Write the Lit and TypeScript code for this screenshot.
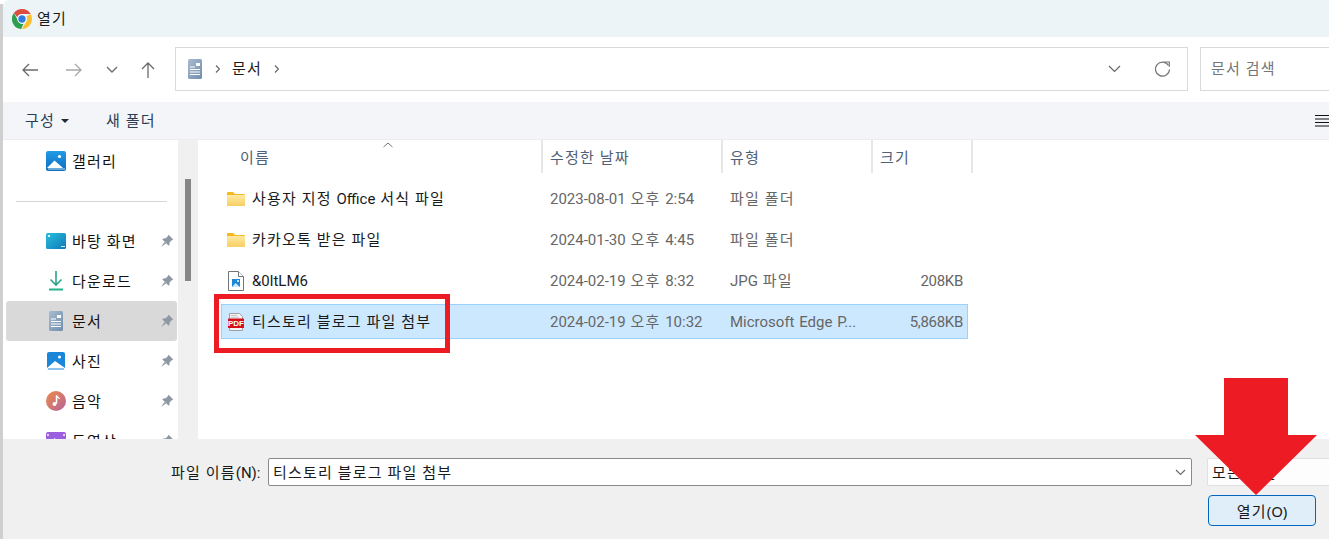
import { LitElement, html, css, svg } from "lit";
import { customElement } from "lit/decorators.js";

const k = (text: string) =>
  text.split(/([\uAC00-\uD7A3]+)/).map((part) =>
    /[\uAC00-\uD7A3]/.test(part) ? html`<span class="k">${part}</span>` : part);

const pin = svg`<svg class="pin" width="14" height="14" viewBox="0 0 14 14"><path d="M8.600 .8 13.200 5.400 11.800 6.200 9.700 8.300 9.400 11 8.400 11.600 2.400 5.600 3 4.600 5.700 4.300 7.800 2.200Z M4.600 8 1 13 6 9.400Z" fill="#8d98a3"/></svg>`;
const docIcon = svg`<svg width="14" height="20" viewBox="0 0 14 20"><defs><linearGradient id="dg" x1="0" y1="0" x2="1" y2="1"><stop offset="0" stop-color="#a9bcd0"/><stop offset="1" stop-color="#6f8eae"/></linearGradient></defs><rect width="14" height="20" rx="1.500" fill="url(#dg)"/><path d="M2 8h5M2 10.500h10M2 13h10M2 15.500h10" stroke="#fff" stroke-width="1.100" fill="none"/><rect x="8" y="4" width="4" height="3" fill="#fff"/></svg>`;
const gallery = svg`<svg width="20" height="20" viewBox="0 0 20 20"><defs><linearGradient id="gg" x1="0" y1="0" x2="0" y2="1"><stop offset="0" stop-color="#1f9be6"/><stop offset="1" stop-color="#0f6cbd"/></linearGradient></defs><rect width="20" height="20" rx="2" fill="url(#gg)"/><circle cx="13.500" cy="5.500" r="1.600" fill="#fff"/><path d="M1 17 8.500 9.500 17 17Z" fill="#fff"/><path d="M2 17.500h17v1H2z" fill="#bfe0f7"/></svg>`;
const desktop = svg`<svg width="20" height="16" viewBox="0 0 20 16"><defs><linearGradient id="dk" x1="0" y1="0" x2="1" y2="1"><stop offset="0" stop-color="#28c0dc"/><stop offset="1" stop-color="#0f79b8"/></linearGradient></defs><rect width="20" height="16" rx="1.500" fill="url(#dk)"/><rect x="2" y="2" width="2" height="2" fill="#d5f4fa"/><rect x="15" y="13" width="4" height="1" fill="#d5f4fa"/></svg>`;
const download = svg`<svg width="14" height="20" viewBox="0 0 14 20"><path d="M7 0v14M1.500 8.500 7 14l5.500-5.500" fill="none" stroke="#2aa58c" stroke-width="1.600"/><path d="M0 18.500h14" stroke="#21b38a" stroke-width="2"/></svg>`;
const photo = svg`<svg width="18" height="18" viewBox="0 0 18 18"><rect width="18" height="18" rx="2" fill="#1a86d9"/><circle cx="12.500" cy="5" r="1.500" fill="#fff"/><path d="M0 16 8 9l10 7v.5a1.500 1.500 0 0 1-1.500 1.500h-15A1.500 1.500 0 0 1 0 16.500Z" fill="#fff"/><path d="M1 17h16" stroke="#1a86d9" stroke-width="1"/></svg>`;
const music = svg`<svg width="20" height="20" viewBox="0 0 20 20"><defs><linearGradient id="mg" x1="0" y1="0" x2="1" y2="1"><stop offset="0" stop-color="#ef8a45"/><stop offset="1" stop-color="#b3649f"/></linearGradient></defs><circle cx="10" cy="10" r="10" fill="url(#mg)"/><path d="M10.500 4.500v8" stroke="#fff" stroke-width="1.500"/><path d="M10.500 4.500c.5 2 2.500 2 3 3.500" stroke="#fff" stroke-width="1.300" fill="none"/><circle cx="8.500" cy="13" r="2" fill="#fff"/></svg>`;
const video = svg`<svg width="20" height="18" viewBox="0 0 20 18"><rect width="20" height="18" rx="2" fill="#9b5fe0"/><path d="M1 2h2v2H1zM1 7h2v2H1zM17 2h2v2h-2zM17 7h2v2h-2z" fill="#e3cffa"/><path d="M8 6l5 3-5 3z" fill="#fff"/></svg>`;
const folder = svg`<svg width="18" height="14" viewBox="0 0 18 14"><path d="M0 1.200C0 .5.500 0 1.200 0H6l2 2h9c.6 0 1 .4 1 1v1H0Z" fill="#f5b81f"/><defs><linearGradient id="fg" x1="0" y1="0" x2="0" y2="1"><stop offset="0" stop-color="#fde9a3"/><stop offset="1" stop-color="#f8cf63"/></linearGradient></defs><path d="M0 3h18v10c0 .6-.4 1-1 1H1c-.6 0-1-.4-1-1Z" fill="url(#fg)"/></svg>`;
const jpg = svg`<svg width="16" height="20" viewBox="0 0 16 20"><path d="M.500.500h10l5 5v14H.500Z" fill="#fff" stroke="#70757a"/><path d="M10.500.500v5h5" fill="#fff" stroke="#70757a"/><rect x="4" y="8" width="8" height="8" fill="#1f86d8"/><path d="M4 16l3.500-4 4.500 4Z" fill="#cfe9fb"/><circle cx="10" cy="10" r="1" fill="#fff"/></svg>`;
const pdf = svg`<svg width="16" height="18" viewBox="0 0 16 18"><path d="M1.500.500h10l3 3v14h-13Z" fill="#f4f4f4" stroke="#a0a0a0"/><path d="M3 2.500h6M3 4.300h8" stroke="#bbb" stroke-width=".8"/><rect y="5.500" width="16" height="9.500" rx=".5" fill="#d3101c"/><text x="8" y="13.200" text-anchor="middle" font-family="Liberation Sans" font-weight="700" font-size="8" fill="#fff">PDF</text></svg>`;

const side = [
  { icon: gallery, name: "갤러리", pin: false },
  null,
  { icon: desktop, name: "바탕 화면", pin: true },
  { icon: download, name: "다운로드", pin: true },
  { icon: docIcon, name: "문서", pin: true, sel: true },
  { icon: photo, name: "사진", pin: true },
  { icon: music, name: "음악", pin: true },
  { icon: video, name: "동영상", pin: true },
];
const files = [
  { icon: folder, name: "사용자 지정 Office 서식 파일", date: "2023-08-01 오후 2:54", type: "파일 폴더", size: "" },
  { icon: folder, name: "카카오톡 받은 파일", date: "2024-01-30 오후 4:45", type: "파일 폴더", size: "" },
  { icon: jpg, name: "&0ltLM6", date: "2024-02-19 오후 8:32", type: "JPG 파일", size: "208KB" },
  { icon: pdf, name: "티스토리 블로그 파일 첨부", date: "2024-02-19 오후 10:32", type: "Microsoft Edge P...", size: "5,868KB", sel: true },
];

@customElement("app-root")
export class AppRoot extends LitElement {
  static styles = css`
    :host { display: block; position: relative; width: 1329px; height: 539px; overflow: hidden; background: #fff;
      font: 15px/20px Roboto, "Noto Sans CJK KR", sans-serif; color: #1a1a1a; word-spacing: 1px; }
    .k { font-family: "Noto Sans CJK KR", sans-serif; letter-spacing: 1.200px; }
    .win { height: 539px; margin-left: 3px; display: flex; flex-direction: column; }
    .edge { position: absolute; left: 0; top: 4px; bottom: 0; width: 3px; background: #cfcfcf; }
    .title { height: 37px; flex: none; background: #edf4f8; display: flex; align-items: center; gap: 5px; padding-left: 9px; border-top-left-radius: 6px; }
    .title svg { display: block; }
    .nav { height: 65px; flex: none; display: flex; align-items: flex-start; padding-top: 10px; box-sizing: border-box; }
    .navbtns { width: 172px; display: flex; align-items: center; flex: none; padding: 1px 0 0 19px; box-sizing: border-box; height: 44px; }
    .navbtns svg { display: block; }
    .addr { width: 1013px; height: 44px; box-sizing: border-box; border: 1.500px solid #d9d9d9; display: flex; align-items: center; padding-left: 12px; flex: none; }
    .addr .crumb { margin: -2px 12px 0 12px; line-height: 20px; }
    .addr .sep { display: block; margin-left: 13px; }
    .addr .grow { flex: 1; }
    .addr .dd { margin-right: 33px; display: block; }
    .addr .rf { margin-right: 16px; display: block; }
    .search { margin-left: 12px; flex: 1; height: 44px; box-sizing: border-box; border: 1.500px solid #d9d9d9; border-right: 0; color: #757575; padding: 10px 0 0 10px; white-space: nowrap; }
    .tools { height: 38px; flex: none; background: #f3f5f8; border-bottom: 1px solid #ececec; box-sizing: border-box; display: flex; align-items: center; padding-left: 22px; color: #2b3d55; }
    .tools .caret { width: 0; height: 0; border: 4px solid transparent; border-top: 4px solid #1f2a3a; border-bottom: 0; margin: 1px 0 0 6px; }
    .tools .nf { margin-left: 37px; }
    .tools .gap { flex: 1; }
    .tools .menu { display: block; margin-top: -1px; }
    .body { flex: 1; min-height: 0; display: flex; overflow: hidden; }
    .side { width: 175px; flex: none; overflow: hidden; padding: 1px 1px 0 3px; box-sizing: border-box; }
    .item { height: 40px; display: flex; align-items: center; border-radius: 3px; position: relative; color: #111; }
    .item.sel { background: #d9d9d9; }
    .item .ic { width: 20px; margin-left: 40px; display: flex; justify-content: center; align-items: center; flex: none; }
    .item .nm { margin-left: 6px; flex: 1; white-space: nowrap; }
    .item .pin { margin-right: 3px; flex: none; }
    .div { height: 40px; display: flex; align-items: center; padding: 0 10px; }
    .div i { display: block; height: 1px; flex: 1; background: #d6d6d6; }
    .track { width: 20px; flex: none; background: #f0f0f0; padding: 39px 0 0 7px; box-sizing: border-box; }
    .thumb { width: 6px; height: 102px; background: #868686; }
    .list { flex: 1; min-width: 0; position: relative; }
    .head { height: 33px; display: grid; grid-template-columns: 345px 180px 150px 100px; color: #4f6077; position: relative; }
    .head div { box-sizing: border-box; border-right: 2px solid #e6e6e6; padding: 7px 0 0 7px; }
    .head div:first-child { padding-left: 42px; }
    .sort { position: absolute; left: 185px; top: 2px; display: block; }
    .rows { margin: 8px 0 0 23px; width: 747px; display: flex; flex-direction: column; gap: 6px; }
    .row { height: 35px; box-sizing: border-box; display: grid; grid-template-columns: 321px 180px 150px 90px; align-items: center; border: 1px solid transparent; color: #666; }
    .row.sel { background: #cce8ff; border-color: #99d1ff; }
    .row .n { display: flex; align-items: center; color: #1a1a1a; white-space: nowrap; }
    .row .ic { width: 18px; display: flex; justify-content: center; margin: 0 7px 0 5px; flex: none; }
    .row .d { padding-left: 7px; white-space: nowrap; }
    .row .t { padding-left: 7px; white-space: nowrap; }
    .row .s { text-align: right; white-space: nowrap; letter-spacing: -.3px; }
    .foot { height: 100px; flex: none; background: #f0f0f0; box-sizing: border-box; padding-top: 19px; }
    .f1 { display: flex; align-items: center; height: 28px; }
    .f1 label { margin-left: 168px; width: 97px; white-space: nowrap; }
    .inp { width: 924px; height: 28px; box-sizing: border-box; background: #fff; border: 1px solid #8a8a8a; border-radius: 2px; display: flex; align-items: center; padding-left: 4px; justify-content: space-between; }
    .inp svg { margin-right: 5px; display: block; }
    .filter { margin-left: 15px; flex: 1; height: 28px; box-sizing: border-box; background: #fdfdfd; border: 1px solid #e0e0e0; border-right: 0; border-radius: 2px 0 0 2px; padding: 3px 0 0 4px; white-space: nowrap; }
    .f2 { margin: 9px 0 0 1205px; width: 108px; height: 31px; box-sizing: border-box; background: #e0eef9; border: 1px solid #0067c0; border-radius: 4px; text-align: center; line-height: 29px; font-family: "Noto Sans", sans-serif; }
    .mark { position: absolute; left: 214px; top: 294px; width: 236px; height: 59px; box-sizing: border-box; border: 5px solid #ed1c24; }
    .arrow { position: absolute; left: 1195px; top: 378px; display: block; }
  `;

  render() {
    return html`
      <div class="edge"></div>
      <div class="win">
        <div class="title">
          <svg width="20" height="20" viewBox="0 0 20 20">
            <path d="M10 0a10 10 0 0 1 8.660 5H10a5 5 0 0 0-4.700 3.300L1.900 4.100A10 10 0 0 1 10 0Z" fill="#dd4b3e"/>
            <path d="M18.660 5A10 10 0 0 1 10 20l4.300-7.500A5 5 0 0 0 14.300 7.500L18.660 5Z" fill="#fbc02d"/>
            <path d="M1.900 4.100 6 11.500A5 5 0 0 0 11.500 14.800L9.200 20A10 10 0 0 1 1.900 4.100Z" fill="#2e9e4f"/>
            <circle cx="10" cy="10" r="4.700" fill="#fff"/><circle cx="10" cy="10" r="3.700" fill="#2f7ce0"/>
          </svg>
          <span>${k("열기")}</span>
        </div>
        <div class="nav">
          <div class="navbtns">
            <svg width="16" height="14" viewBox="0 0 16 14"><path d="M16 7H1M7 1 1 7l6 6" fill="none" stroke="#6b6b6b" stroke-width="1.300"/></svg>
            <svg style="margin-left:28px" width="16" height="14" viewBox="0 0 16 14"><path d="M0 7h15M9 1l6 6-6 6" fill="none" stroke="#a8a8a8" stroke-width="1.300"/></svg>
            <svg style="margin-left:24px" width="12" height="7" viewBox="0 0 12 7"><path d="M1 1l5 5 5-5" fill="none" stroke="#6b6b6b" stroke-width="1.300"/></svg>
            <svg style="margin-left:23px" width="14" height="16" viewBox="0 0 14 16"><path d="M7 16V1M1 7l6-6 6 6" fill="none" stroke="#6b6b6b" stroke-width="1.300"/></svg>
          </div>
          <div class="addr">
            ${docIcon}
            <svg class="sep" width="5" height="8" viewBox="0 0 5 8"><path d="M1 .5 4.500 4 1 7.500" fill="none" stroke="#666" stroke-width="1.200"/></svg>
            <span class="crumb">${k("문서")}</span>
            <svg width="5" height="8" viewBox="0 0 5 8"><path d="M1 .5 4.500 4 1 7.500" fill="none" stroke="#666" stroke-width="1.200"/></svg>
            <span class="grow"></span>
            <svg class="dd" width="13" height="8" viewBox="0 0 13 8"><path d="M1 1l5.500 5.500L12 1" fill="none" stroke="#666" stroke-width="1.200"/></svg>
            <svg class="rf" width="17" height="17" viewBox="0 0 17 17"><path d="M14.500 4.500A7 7 0 1 0 15.500 8.500" fill="none" stroke="#757575" stroke-width="1.200"/><path d="M10.500 1h4.800v4.800" fill="none" stroke="#757575" stroke-width="1.200"/></svg>
          </div>
          <div class="search">${k("문서 검색")}</div>
        </div>
        <div class="tools">
          <span>${k("구성")}</span><span class="caret"></span><span class="nf">${k("새 폴더")}</span><span class="gap"></span>
          <svg class="menu" width="14" height="13" viewBox="0 0 14 13"><path d="M0 1.500h14M0 5h14M0 8.500h14M0 12h14" stroke="#111" stroke-width="1"/></svg>
        </div>
        <div class="body">
          <div class="side">
            ${side.map((s) => s === null
              ? html`<div class="div"><i></i></div>`
              : html`<div class="item ${s.sel ? "sel" : ""}"><span class="ic">${s.icon}</span><span class="nm">${k(s.name)}</span>${s.pin ? pin : ""}</div>`)}
          </div>
          <div class="track"><div class="thumb"></div></div>
          <div class="list">
            <div class="head">
              <div>${k("이름")}</div><div>${k("수정한 날짜")}</div><div>${k("유형")}</div><div>${k("크기")}</div>
              <svg class="sort" width="10" height="6" viewBox="0 0 10 6"><path d="M.5 5 5 1l4.500 4" fill="none" stroke="#777" stroke-width="1"/></svg>
            </div>
            <div class="rows">
              ${files.map((f) => html`<div class="row ${f.sel ? "sel" : ""}">
                <div class="n"><span class="ic">${f.icon}</span><span>${k(f.name)}</span></div>
                <div class="d">${k(f.date)}</div><div class="t">${k(f.type)}</div><div class="s">${f.size}</div>
              </div>`)}
            </div>
          </div>
        </div>
        <div class="foot">
          <div class="f1">
            <label>${k("파일 이름(N):")}</label>
            <div class="inp"><span>${k("티스토리 블로그 파일 첨부")}</span><svg width="11" height="7" viewBox="0 0 11 7"><path d="M1 1l4.500 4.500L10 1" fill="none" stroke="#666" stroke-width="1.100"/></svg></div>
            <div class="filter">${k("모든 파일")}</div>
          </div>
          <div class="f2">${k("열기(O)")}</div>
        </div>
      </div>
      <div class="mark"></div>
      <svg class="arrow" width="122" height="118" viewBox="0 0 122 118"><path d="M29 0h64v57h29L61 117 0 57h29Z" fill="#ed1c24"/></svg>
    `;
  }
}
